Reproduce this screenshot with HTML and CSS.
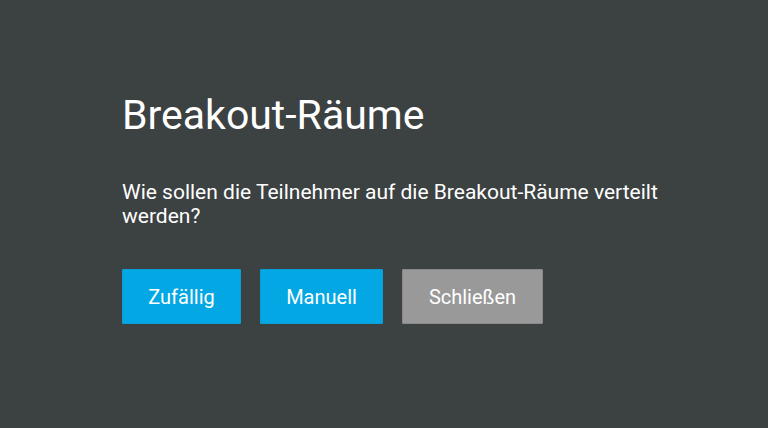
FILE: index.html
```html
<!DOCTYPE html>
<html lang="de">
<head>
<meta charset="utf-8">
<link rel="stylesheet" href="styles.css">
</head>
<body>
<div class="dialog">
  <h1 class="title">Breakout-Räume</h1>
  <p class="text">Wie sollen die Teilnehmer auf die Breakout-Räume verteilt werden?</p>
  <div class="actions">
    <button class="btn btn-primary btn-random">Zufällig</button>
    <button class="btn btn-primary btn-manual">Manuell</button>
    <button class="btn btn-secondary btn-close">Schließen</button>
  </div>
</div>
</body>
</html>
```
FILE: styles.css
```css
html, body {
  margin: 0;
  height: 100%;
}
body {
  background: #3c4142;
  font-family: Roboto, "Liberation Sans", sans-serif;
  color: #ffffff;
}
.dialog {
  padding: 91px 0 0 122px;
  width: 570px;
}
.title {
  margin: 0;
  font-size: 41px;
  font-weight: 400;
  line-height: 48px;
}
.text {
  margin: 41px 0 0;
  font-size: 21px;
  line-height: 24px;
}
.actions {
  display: flex;
  gap: 19px;
  margin-top: 41px;
}
.btn {
  font-family: inherit;
  font-size: 20px;
  color: #ffffff;
  height: 55px;
  border: 1px solid transparent;
  border-radius: 1px;
  padding: 0;
  cursor: pointer;
}
.btn-primary {
  background: #03a7e4;
  border-color: #0a9fd6;
}
.btn-secondary {
  background: #999999;
  border-color: #8a8a8a;
}
.btn-random { width: 119px; }
.btn-manual { width: 123px; }
.btn-close { width: 141px; }
```
